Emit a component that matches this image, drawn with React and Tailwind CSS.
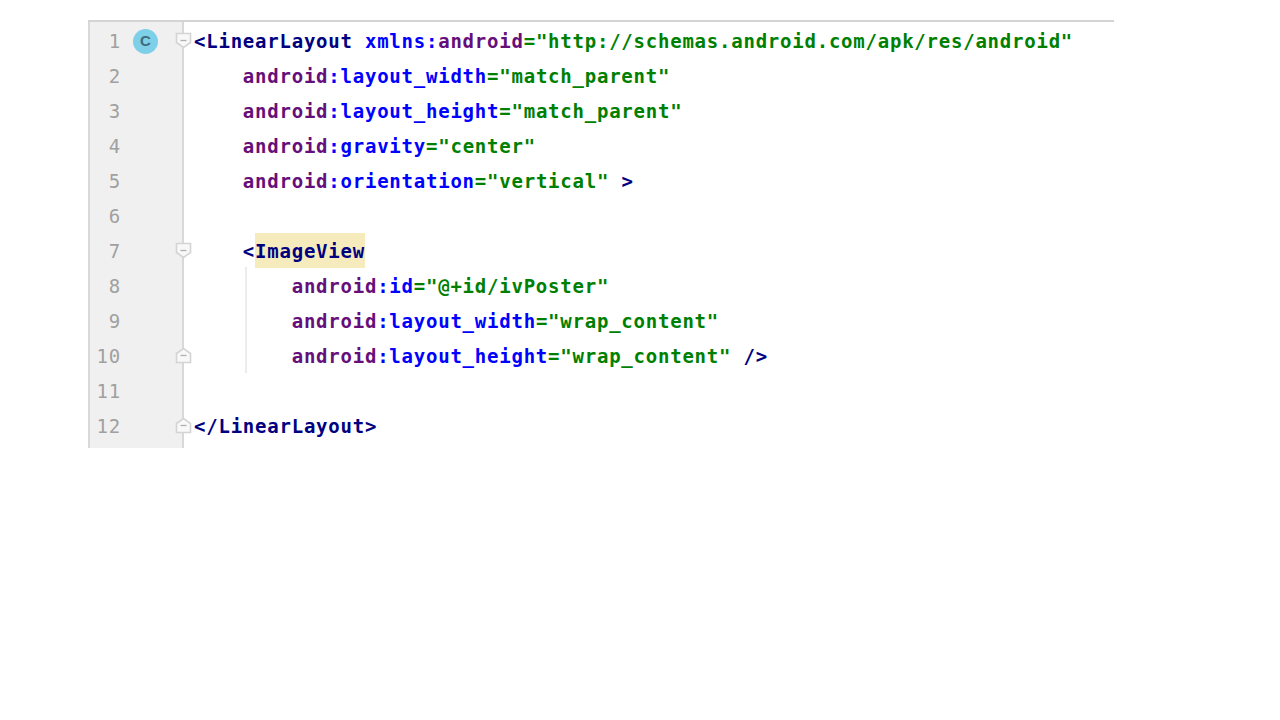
const T = ({ children }) => <span className="text-[#000080]">{children}</span>
const N = ({ children }) => <span className="text-[#660e7a]">{children}</span>
const A = ({ children }) => <span className="text-[#0000ff]">{children}</span>
const V = ({ children }) => <span className="text-[#008000]">{children}</span>

const Attr = ({ name, value }) => (
  <>
    <N>android</N>
    <A>:{name}</A>
    <V>="{value}"</V>
  </>
)

// fold marker in the gutter: down = block start, up = block end
function FoldIcon({ type }) {
  const shape = type === 'down'
    ? 'M1.5 1.5 H15.5 V10.5 L8.5 15.5 L1.5 10.5 Z'
    : 'M1.5 15.5 H15.5 V6.5 L8.5 1.5 L1.5 6.5 Z'
  return (
    <svg width="17" height="17" viewBox="0 0 17 17" className="absolute left-[-9px] top-[8px]">
      <path d={shape} fill="#f8f8f8" stroke="#d4d4d4" strokeWidth="1.6" />
      <path d="M5.5 8.5 H11.5" stroke="#b0b0b0" strokeWidth="1.3" />
    </svg>
  )
}

const lines = [
  {
    fold: 'down',
    badge: true,
    code: (
      <>
        <T>&lt;LinearLayout</T> <A>xmlns:</A><N>android</N>
        <V>="http://schemas.android.com/apk/res/android"</V>
      </>
    ),
  },
  { code: <>{'    '}<Attr name="layout_width" value="match_parent" /></> },
  { code: <>{'    '}<Attr name="layout_height" value="match_parent" /></> },
  { code: <>{'    '}<Attr name="gravity" value="center" /></> },
  { code: <>{'    '}<Attr name="orientation" value="vertical" /> <T>&gt;</T></> },
  { code: '' },
  {
    fold: 'down',
    code: (
      <>
        {'    '}<T>&lt;</T><span className="inline-block h-[35px] -translate-y-px bg-[#f6ebbc]"><span className="inline-block translate-y-px"><T>ImageView</T></span></span>
      </>
    ),
  },
  { code: <>{'        '}<Attr name="id" value="@+id/ivPoster" /></> },
  { code: <>{'        '}<Attr name="layout_width" value="wrap_content" /></> },
  { fold: 'up', code: <>{'        '}<Attr name="layout_height" value="wrap_content" /> <T>/&gt;</T></> },
  { code: '' },
  { fold: 'up', code: <T>&lt;/LinearLayout&gt;</T> },
]

export default function App() {
  return (
    <div className="min-h-[720px] bg-white pt-[20px] pl-[88px]">
      <div className="relative w-[1026px] h-[428px] border-t-2 border-[#d4d4d4] pt-[1.5px] font-['DejaVu_Sans_Mono','Liberation_Mono',monospace] text-[19px] tracking-[0.77px]">
        {/* gutter background */}
        <div className="absolute left-0 top-0 bottom-0 w-[96px] bg-[#f0f0f0] border-l-2 border-r-2 border-[#d8d8d8]" />
        {/* indent guide for the ImageView attributes */}
        <div className="absolute left-[157px] top-[245px] h-[106px] w-[2px] bg-[#ececec]" />

        <div className="relative flex flex-col">
          {lines.map((line, i) => (
            <div key={i} className="flex h-[35px] items-center">
              <div className="relative flex h-full w-[96px] shrink-0 items-center">
                <span className="w-[33px] text-right font-normal text-[#a0a0a0]">{i + 1}</span>
                {line.badge && (
                  <span className="absolute left-[45px] top-[5px] flex h-[25px] w-[25px] items-center justify-center rounded-full bg-[#7ecfe8] font-['Liberation_Sans',sans-serif] text-[15px] font-bold tracking-normal text-[#3f6b7a]">
                    C
                  </span>
                )}
                {line.fold && (
                  <span className="absolute left-[96px] top-0">
                    <FoldIcon type={line.fold} />
                  </span>
                )}
              </div>
              <div className="ml-[10px] whitespace-pre font-bold leading-[35px] text-black">{line.code}</div>
            </div>
          ))}
        </div>
      </div>
    </div>
  )
}
